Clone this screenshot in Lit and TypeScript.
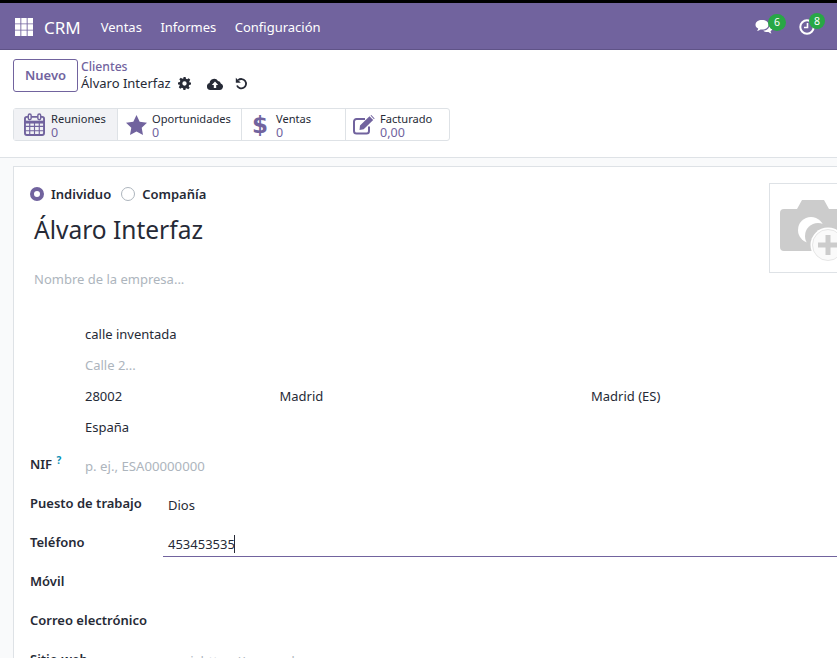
import { LitElement, html, css, svg } from 'lit';
import { customElement } from 'lit/decorators.js';

const calendarIcon = svg`<svg width="21" height="23" viewBox="0 0 22 24" fill="none" stroke="#71639e">
  <rect x="1" y="4" width="20" height="19" rx="2" stroke-width="2"/>
  <path d="M1 9.500h20" stroke-width="3"/>
  <path d="M1 14h20M1 18.500h20M6 10v13M11 10v13M16 10v13" stroke-width="1.200"/>
  <rect x="4.500" y="1" width="3" height="6" rx="1.500" fill="#f1f2f5" stroke-width="1.500"/>
  <rect x="14.500" y="1" width="3" height="6" rx="1.500" fill="#f1f2f5" stroke-width="1.500"/>
</svg>`;

const starIcon = svg`<svg width="21" height="20" viewBox="0 0 21 20"><path fill="#71639e" d="M10.500 0l3.200 6.700 7.300 1-5.300 5.100 1.300 7.200-6.500-3.500L4 20l1.300-7.200L0 7.700l7.300-1z"/></svg>`;

const editIcon = svg`<svg width="22" height="20" viewBox="0 0 22 20" fill="none">
  <path d="M16 11.500V16a2.500 2.500 0 0 1-2.500 2.500H3.500A2.500 2.500 0 0 1 1 16V6.500A2.500 2.500 0 0 1 3.500 4H12" stroke="#71639e" stroke-width="2"/>
  <path fill="#71639e" d="M7 10.500L16.500 1.200l3.700 3.700-9.500 9.400-4.200.6zM17.500.5l.8-.4 3.300 3.300-.6.800z"/>
</svg>`;

const gearIcon = svg`<svg width="13" height="13" viewBox="0 0 24 24"><path fill="#262a36" fill-rule="evenodd" d="M10 0h4l.7 3.400 2.200.9 2.900-1.900 2.800 2.800-1.900 2.900.9 2.200L24 10v4l-3.400.7-.9 2.200 1.900 2.900-2.800 2.800-2.900-1.900-2.200.9L14 24h-4l-.7-3.400-2.200-.9-2.900 1.900-2.800-2.800 1.900-2.900-.9-2.200L0 14v-4l3.400-.7.9-2.200-1.900-2.900 2.800-2.800 2.900 1.900 2.200-.9zM12 8a4 4 0 1 0 0 8 4 4 0 0 0 0-8z"/></svg>`;

const cloudIcon = svg`<svg width="16" height="12" viewBox="0 0 16 12"><path fill="#262a36" fill-rule="evenodd" d="M3.500 12A3.500 3.500 0 0 1 2.600 5.100 4.500 4.500 0 0 1 11 3.100 3 3 0 0 1 13.800 5.600 3.300 3.300 0 0 1 12.500 12zM8 3.500L4.800 7h2v3h2.400V7h2z"/></svg>`;

const undoIcon = svg`<svg width="13" height="13" viewBox="0 0 13 13" fill="none"><path d="M3.200 3.200A4.700 4.700 0 1 1 2 8.500" stroke="#262a36" stroke-width="1.800"/><path fill="#262a36" d="M.8.800v5h5z"/></svg>`;

const commentsIcon = svg`<svg width="18" height="15" viewBox="0 0 18 15"><path fill="#fff" d="M7 0c3.800 0 6.500 2 6.500 4.800S10.800 9.600 7 9.600l-1.500-.1C4.500 10.400 3.300 10.900 2 11.100c.7-.8 1.100-1.600 1.200-2.500C1.400 7.800.5 6.400.5 4.800.5 2 3.200 0 7 0z"/><path fill="#fff" d="M14.500 5c1.900.7 3 1.900 3 3.300 0 1.200-.8 2.200-2 2.900.1.800.5 1.500 1.100 2.300-1.200-.2-2.300-.7-3.100-1.500-2 .3-4.200-.2-5.300-1.300 3.500 0 6.300-2.300 6.300-5.700z"/></svg>`;

const clockIcon = svg`<svg width="16" height="16" viewBox="0 0 16 16" fill="none" stroke="#fff"><circle cx="8" cy="8" r="6.700" stroke-width="2"/><path d="M8.500 4v4.500H5" stroke-width="1.600"/></svg>`;

const appsIcon = svg`<svg width="18" height="18" viewBox="0 0 18 18" fill="#fff"><path d="M0 0h5.400v5.400H0zM6.300 0h5.400v5.400H6.300zM12.600 0H18v5.400h-5.400zM0 6.300h5.400v5.400H0zM6.300 6.300h5.400v5.400H6.300zM12.600 6.300H18v5.400h-5.400zM0 12.600h5.400V18H0zM6.300 12.600h5.400V18H6.300zM12.600 12.600H18V18h-5.400z"/></svg>`;

const cameraIcon = svg`<svg class="camera" width="72" height="63" viewBox="0 0 72 63">
  <path fill="#ccc" d="M4 9h13l5-9h22l5 9h15a4 4 0 0 1 4 4v34a4 4 0 0 1-4 4H4a4 4 0 0 1-4-4V13a4 4 0 0 1 4-4z"/>
  <circle cx="31" cy="30" r="13" fill="#fff"/>
  <circle cx="38" cy="36" r="13" fill="#ccc"/>
  <circle cx="48" cy="45" r="17.500" fill="#fff"/>
  <circle cx="48" cy="45" r="15.500" fill="#fafafa" stroke="#e6e6e6"/>
  <path d="M48 35v20M38 45h20" stroke="#ccc" stroke-width="5"/>
</svg>`;

@customElement('app-root')
export class AppRoot extends LitElement {
  static override styles = css`
    :host {
      display: block;
      width: 837px;
      height: 658px;
      overflow: hidden;
      background: #f9fafb;
      font-family: 'Noto Sans', sans-serif;
      font-size: 13px;
      color: #262a36;
    }

    /* ── Navbar ── */
    .topedge { height: 3px; background: #000; }
    .navbar {
      height: 47px;
      box-sizing: border-box;
      display: flex;
      align-items: center;
      background: #71639e;
      border-bottom: 1px solid #5f5387;
      color: #fff;
      padding: 2px 0 0 15px;
    }
    .brand { font-size: 17px; margin-left: 11px; margin-right: 20px; }
    .menu { font-size: 13px; margin-right: 18.500px; }
    .systray { margin-left: auto; display: flex; align-items: center; }
    .tray-item { position: relative; display: flex; }
    .tray-item.chat { margin-right: 26px; }
    .tray-item.clock { margin-right: 22px; }
    .count {
      position: absolute;
      border-radius: 50%;
      background: #28a745;
      font-size: 10.500px;
      text-align: center;
      color: #fff;
    }
    .chat .count { top: -6px; left: 13px; width: 18px; height: 17px; line-height: 17px; }
    .clock .count { top: -6px; left: 10px; width: 16px; height: 16px; line-height: 16px; }

    /* ── Control panel ── */
    .panel {
      height: 108px;
      box-sizing: border-box;
      background: #fff;
      border-bottom: 1px solid #dee2e6;
      padding: 8px 13px 0;
    }
    .panel-top { display: flex; align-items: center; height: 34px; }
    .btn-new {
      box-sizing: border-box;
      width: 65px;
      height: 33px;
      border: 1px solid #71639e;
      border-radius: 3px;
      display: flex;
      align-items: center;
      justify-content: center;
      color: #71639e;
      font-weight: 600;
      margin-right: 3px;
    }
    .crumb { line-height: 17px; }
    .crumb-link { color: #71639e; font-weight: 500; font-size: 12.200px; }
    .crumb-row { display: flex; align-items: center; }
    .crumb-row svg { display: block; }
    .gear { margin-left: 7px; }
    .cloud { margin-left: 16px; }
    .undo { margin-left: 12px; }

    .stats {
      display: flex;
      width: 437px;
      height: 33px;
      margin-top: 16px;
      border: 1px solid #dee2e6;
      border-radius: 3px;
      box-sizing: border-box;
    }
    .stat {
      box-sizing: border-box;
      display: flex;
      align-items: center;
      border-right: 1px solid #dee2e6;
      line-height: 14px;
      font-size: 11.100px;
    }
    .stat:last-child { border-right: none; }
    .stat.active { background: #f1f2f5; }
    .stat .ico { width: 34px; display: flex; justify-content: center; flex-shrink: 0; padding-left: 2px; box-sizing: border-box; }
    .stat.active .ico { width: 37px; padding-left: 4px; }
    .stat .txt { padding-top: 2px; }
    .stat .val { color: #71639e; font-size: 12.500px; }
    .dollar { color: #71639e; font-family: 'DejaVu Sans', sans-serif; font-weight: 700; font-size: 23px; line-height: 24px; }

    /* ── Form sheet ── */
    .sheet {
      box-sizing: border-box;
      width: 900px;
      height: 520px;
      margin: 8px 0 0 13px;
      background: #fff;
      border: 1px solid #dee2e6;
      padding: 16px 16px 0;
    }
    .head { display: flex; height: 110px; }
    .head-main { width: 739px; flex-shrink: 0; }
    .radios { display: flex; align-items: center; height: 21px; font-weight: 600; color: #262a36; font-size: 13px; }
    .radio { box-sizing: border-box; width: 14px; height: 14px; border-radius: 50%; border: 1px solid #adb5bd; margin-right: 7px; }
    .radio.on { border: 4px solid #71639e; background: #fff; margin-right: 7px; }
    .radios .gap { margin-right: 10px; }
    .name { font-size: 24.500px; line-height: 36px; margin: 8px 0 0 4px; }
    .company { margin: 22px 0 0 4px; color: #adb5bd; font-size: 13px; line-height: 18px; }
    .avatar {
      box-sizing: border-box;
      width: 90px;
      height: 90px;
      flex-shrink: 0;
      border: 1px solid #dee2e6;
      padding: 16px 0 0 10px;
    }
    .camera { display: block; }

    .address { padding: 26px 0 0 55px; }
    .line { height: 31px; line-height: 31px; display: flex; font-size: 13px; }
    .muted { color: #adb5bd; }
    .col1 { width: 194.500px; }
    .col2 { width: 311.500px; }

    .field { display: flex; height: 38.700px; align-items: center; }
    .fields { margin-top: 3px; }
    .field.after-focus { margin-top: 1px; }
    .label { width: 133px; font-weight: 600; font-size: 13px; flex-shrink: 0; position: relative; top: -1px; }
    .help { color: #0a8fb5; font-size: 10px; vertical-align: super; font-weight: 700; margin-left: 1px; line-height: 0; }
    .value { padding-left: 5px; position: relative; top: 1px; }
    .nif-value { margin-left: -83px; font-size: 13.200px; }
    .value.focus {
      box-sizing: border-box;
      width: 700px;
      height: 26px;
      top: 0;
      margin-top: 3px;
      display: flex;
      align-items: center;
      border-bottom: 1px solid #71639e;
    }
    .caret { display: inline-block; width: 1px; height: 18px; margin-left: -1px; background: #262a36; }
  `;

  override render() {
    return html`
      <div class="topedge"></div>
      <nav class="navbar">
        ${appsIcon}
        <span class="brand">CRM</span>
        <span class="menu">Ventas</span>
        <span class="menu">Informes</span>
        <span class="menu">Configuración</span>
        <div class="systray">
          <div class="tray-item chat">${commentsIcon}<span class="count">6</span></div>
          <div class="tray-item clock">${clockIcon}<span class="count">8</span></div>
        </div>
      </nav>

      <section class="panel">
        <div class="panel-top">
          <div class="btn-new">Nuevo</div>
          <div class="crumb">
            <div class="crumb-link">Clientes</div>
            <div class="crumb-row">
              <span>Álvaro Interfaz</span>
              <span class="gear">${gearIcon}</span>
              <span class="cloud">${cloudIcon}</span>
              <span class="undo">${undoIcon}</span>
            </div>
          </div>
        </div>
        <div class="stats">
          <div class="stat active" style="width:104px">
            <span class="ico">${calendarIcon}</span>
            <div class="txt">Reuniones<br /><span class="val">0</span></div>
          </div>
          <div class="stat" style="width:124px">
            <span class="ico">${starIcon}</span>
            <div class="txt">Oportunidades<br /><span class="val">0</span></div>
          </div>
          <div class="stat" style="width:104px">
            <span class="ico"><span class="dollar">$</span></span>
            <div class="txt">Ventas<br /><span class="val">0</span></div>
          </div>
          <div class="stat" style="width:103px">
            <span class="ico">${editIcon}</span>
            <div class="txt">Facturado<br /><span class="val">0,00</span></div>
          </div>
        </div>
      </section>

      <main class="sheet">
        <div class="head">
          <div class="head-main">
            <div class="radios">
              <span class="radio on"></span><span class="gap">Individuo</span>
              <span class="radio"></span><span>Compañía</span>
            </div>
            <div class="name">Álvaro Interfaz</div>
            <div class="company">Nombre de la empresa...</div>
          </div>
          <div class="avatar">${cameraIcon}</div>
        </div>

        <div class="address">
          <div class="line">calle inventada</div>
          <div class="line muted">Calle 2...</div>
          <div class="line">
            <span class="col1">28002</span><span class="col2">Madrid</span><span>Madrid (ES)</span>
          </div>
          <div class="line">España</div>
        </div>

        <div class="fields">
          <div class="field">
            <span class="label">NIF <span class="help">?</span></span>
            <span class="value muted nif-value">p. ej., ESA00000000</span>
          </div>
          <div class="field">
            <span class="label">Puesto de trabajo</span>
            <span class="value">Dios</span>
          </div>
          <div class="field">
            <span class="label">Teléfono</span>
            <span class="value focus">453453535<span class="caret"></span></span>
          </div>
          <div class="field after-focus"><span class="label">Móvil</span></div>
          <div class="field"><span class="label">Correo electrónico</span></div>
          <div class="field">
            <span class="label">Sitio web</span>
            <span class="value muted">p. ej. https://www.odoo.com</span>
          </div>
        </div>
      </main>
    `;
  }
}

declare global {
  interface HTMLElementTagNameMap {
    'app-root': AppRoot;
  }
}
